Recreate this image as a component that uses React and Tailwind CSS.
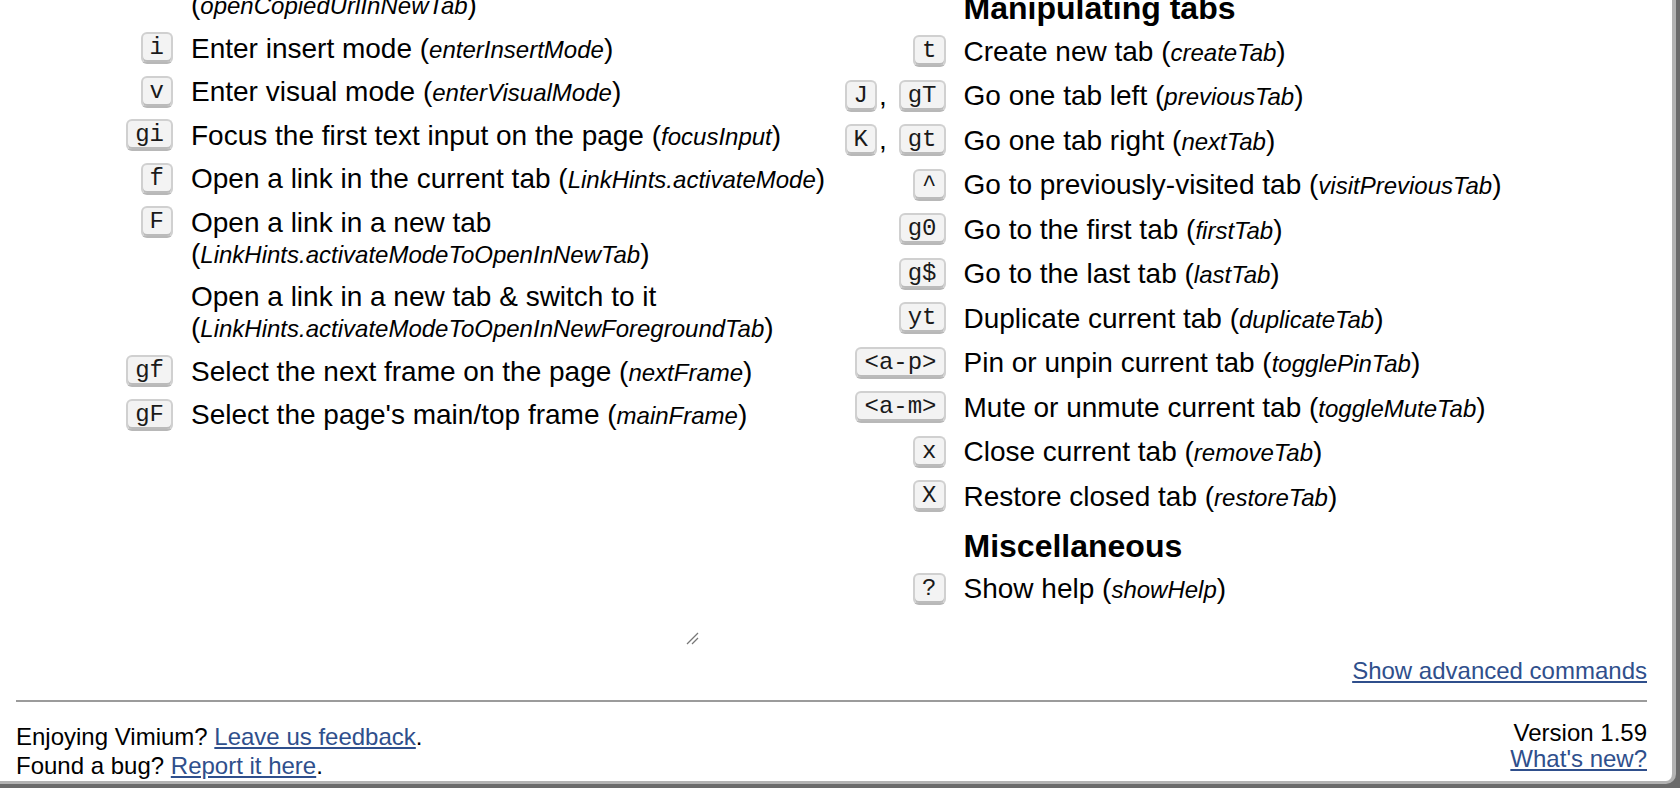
import React from "react";

const sans = "font-['Liberation_Sans',Arial,sans-serif]";

const Key = ({ children }) => (
  <span className="inline-flex h-[32px] items-center rounded-[6px] border-2 border-[#d0d0d0] border-b-[#b8b8b8] bg-[#f3f3f3] px-[7px] font-['Liberation_Mono',monospace] text-[24px] leading-none text-[#1a1a1a] shadow-[inset_0_-2px_0_#bbbbbb]">
    {children}
  </span>
);

const leftRows = [
  { keys: ["P"], text: "Open the clipboard's URL in a new tab", cmd: "openCopiedUrlInNewTab", wrap: true },
  { keys: ["i"], text: "Enter insert mode", cmd: "enterInsertMode" },
  { keys: ["v"], text: "Enter visual mode", cmd: "enterVisualMode" },
  { keys: ["gi"], text: "Focus the first text input on the page", cmd: "focusInput" },
  { keys: ["f"], text: "Open a link in the current tab", cmd: "LinkHints.activateMode" },
  { keys: ["F"], text: "Open a link in a new tab", cmd: "LinkHints.activateModeToOpenInNewTab", wrap: true },
  { keys: [], text: "Open a link in a new tab & switch to it", cmd: "LinkHints.activateModeToOpenInNewForegroundTab", wrap: true },
  { keys: ["gf"], text: "Select the next frame on the page", cmd: "nextFrame" },
  { keys: ["gF"], text: "Select the page's main/top frame", cmd: "mainFrame" },
];

const tabRows = [
  { keys: ["t"], text: "Create new tab", cmd: "createTab" },
  { keys: ["J", "gT"], text: "Go one tab left", cmd: "previousTab" },
  { keys: ["K", "gt"], text: "Go one tab right", cmd: "nextTab" },
  { keys: ["^"], text: "Go to previously-visited tab", cmd: "visitPreviousTab" },
  { keys: ["g0"], text: "Go to the first tab", cmd: "firstTab" },
  { keys: ["g$"], text: "Go to the last tab", cmd: "lastTab" },
  { keys: ["yt"], text: "Duplicate current tab", cmd: "duplicateTab" },
  { keys: ["<a-p>"], text: "Pin or unpin current tab", cmd: "togglePinTab" },
  { keys: ["<a-m>"], text: "Mute or unmute current tab", cmd: "toggleMuteTab" },
  { keys: ["x"], text: "Close current tab", cmd: "removeTab" },
  { keys: ["X"], text: "Restore closed tab", cmd: "restoreTab" },
];

const miscRows = [{ keys: ["?"], text: "Show help", cmd: "showHelp" }];

const Keys = ({ keys }) => (
  <div className="flex h-[31px] items-center justify-end">
    {keys.map((k, i) => (
      <React.Fragment key={k}>
        {i > 0 && <span className="ml-[2px] mr-[12px] text-[28px] leading-none">,</span>}
        <Key>{k}</Key>
      </React.Fragment>
    ))}
  </div>
);

const Desc = ({ row }) => (
  <div className="whitespace-nowrap text-[28px] leading-[31px] text-black">
    {row.text}
    {row.wrap ? <br /> : " "}(<i className="text-[24px] leading-none">{row.cmd}</i>)
  </div>
);

const CommandRow = ({ row, keyWidth, pad }) => (
  <div className={`flex items-start gap-[18px] ${pad}`}>
    <div className={`${keyWidth} shrink-0`}>
      <Keys keys={row.keys} />
    </div>
    <Desc row={row} />
  </div>
);

const Heading = ({ children }) => (
  <div className="flex gap-[18px] pt-[9px] pb-[3px]">
    <div className="w-[114px] shrink-0" />
    <div className="text-[32px] font-bold leading-[36px] text-black">{children}</div>
  </div>
);

const Grip = () => (
  <svg width="14" height="14" viewBox="0 0 14 14">
    <line x1="1" y1="13" x2="12" y2="2" stroke="#777" strokeWidth="1.2" />
    <line x1="6" y1="13" x2="12" y2="7" stroke="#777" strokeWidth="1.2" />
  </svg>
);

const App = () => {
  return (
    <div className={`h-[788px] w-[1680px] overflow-hidden bg-[#6b6b6b] ${sans}`}>
      <div className="flex h-[784px] w-[1676px] flex-col overflow-hidden rounded-br-[10px] border-r-4 border-b-[3px] border-[#b3b3b3] bg-white pl-[16px] pr-[25px]">
        {/* scrolled command list */}
        <div className="min-h-0 flex-1 overflow-hidden">
          <div className="-mt-[48px] grid grid-cols-2">
            <div>
              {leftRows.map((row) => (
                <CommandRow key={row.cmd} row={row} keyWidth="w-[157px]" pad="py-[6.25px]" />
              ))}
            </div>
            <div className="pt-[29px]">
              <Heading>Manipulating tabs</Heading>
              {tabRows.map((row) => (
                <CommandRow key={row.cmd} row={row} keyWidth="w-[114px]" pad="py-[6.75px]" />
              ))}
              <Heading>Miscellaneous</Heading>
              {miscRows.map((row) => (
                <CommandRow key={row.cmd} row={row} keyWidth="w-[114px]" pad="py-[6.75px]" />
              ))}
            </div>
          </div>
        </div>

        <div className="flex h-[14px] pl-[670px]">
          <Grip />
        </div>
        <div className="mt-[12px] text-right text-[24px] leading-[28px]">
          <a href="#" className="text-[#2f4f8c] underline">
            Show advanced commands
          </a>
        </div>
        <div className="mt-[15px] h-[2px] bg-[#9b9b9b]" />
        <div className="flex justify-between text-[24px] text-black">
          <div className="pt-[20px] pb-[1px] leading-[29px]">
            <div>
              Enjoying Vimium?{" "}
              <a href="#" className="text-[#2f4f8c] underline">
                Leave us feedback
              </a>
              .
            </div>
            <div>
              Found a bug?{" "}
              <a href="#" className="text-[#2f4f8c] underline">
                Report it here
              </a>
              .
            </div>
          </div>
          <div className="pt-[18px] text-right leading-[26px]">
            <div>Version 1.59</div>
            <a href="#" className="text-[#2f4f8c] underline">
              What's new?
            </a>
          </div>
        </div>
      </div>
    </div>
  );
};

export default App;
